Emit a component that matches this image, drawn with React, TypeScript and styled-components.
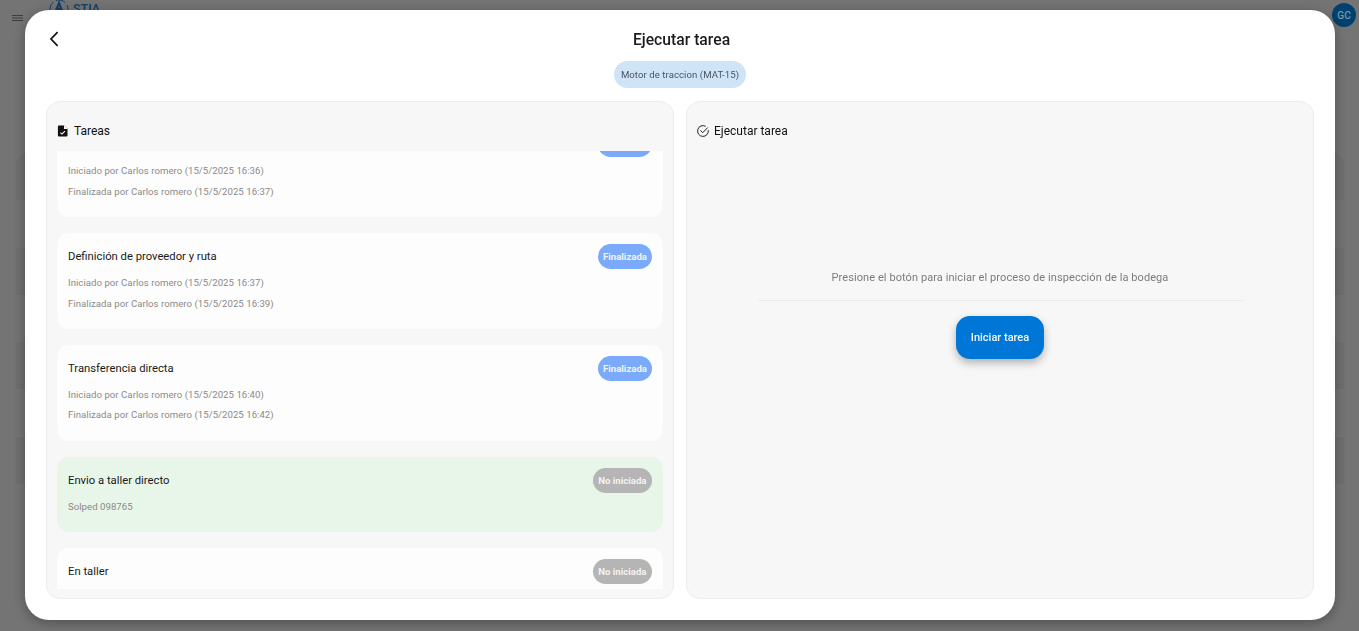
import React from "react";
import styled, { createGlobalStyle } from "styled-components";

const Global = createGlobalStyle`
  html, body { margin: 0; padding: 0; height: 100%; overflow: hidden; }
  body { font-family: Roboto, "Liberation Sans", sans-serif; background: #747474; }
  #root { height: 100%; }
`;

const Page = styled.div`
  height: 631px;
  background: #747474;
  overflow: hidden;
`;

const TopBar = styled.header`
  height: 28px;
  box-sizing: border-box;
  display: flex;
  align-items: flex-start;
  justify-content: space-between;
  padding: 3px 3px 0 12px;
`;

const BarLeft = styled.div`
  display: flex;
  align-items: flex-start;
  gap: 25px;
`;

const Brand = styled.div`
  display: flex;
  align-items: flex-start;
  gap: 4px;
  margin-top: -3px;
`;

const LogoWord = styled.span`
  font-size: 12.5px;
  font-weight: 500;
  color: #143f66;
  line-height: 16px;
  margin-top: 1px;
`;

const Avatar = styled.div`
  width: 24px;
  height: 24px;
  border-radius: 50%;
  background: #01416f;
  color: #7d97ad;
  font-size: 10px;
  font-weight: 500;
  display: flex;
  align-items: center;
  justify-content: center;
`;

const BackdropRows = styled.div`
  margin: 125px 15px 0 16px;
  display: flex;
  flex-direction: column;
  gap: 47.5px;
`;

const BackdropRow = styled.div<{ $first?: boolean }>`
  height: 47px;
  background: rgba(0, 0, 0, 0.045);
  border-radius: ${(p) => (p.$first ? "12px 12px 0 0" : "0")};
`;

const Modal = styled.section`
  position: fixed;
  left: 25px;
  top: 10px;
  width: 1310px;
  height: 610px;
  box-sizing: border-box;
  background: #fff;
  border-radius: 24px;
  box-shadow: 0 3px 12px rgba(0, 0, 0, 0.3);
  padding: 0 21px 21px;
  display: flex;
  flex-direction: column;
`;

const Head = styled.div`
  position: relative;
  display: flex;
  flex-direction: column;
  align-items: center;
  height: 91px;
  flex: none;
`;

const BackButton = styled.button`
  position: absolute;
  left: -3px;
  top: 17px;
  width: 24px;
  height: 24px;
  padding: 0;
  border: 0;
  background: none;
  color: #111;
  display: flex;
`;

const Title = styled.h1`
  margin: 20px 0 0 3px;
  font-size: 15.7px;
  line-height: 20px;
  font-weight: 500;
  color: #1c1c1c;
`;

const MaterialChip = styled.div`
  margin-top: 11px;
  height: 27px;
  box-sizing: border-box;
  padding: 0 7px;
  display: flex;
  align-items: center;
  border-radius: 14px;
  background: #cfe4f7;
  color: #4a5560;
  font-size: 9.6px;
  letter-spacing: 0.06px;
`;

const Columns = styled.div`
  flex: 1;
  min-height: 0;
  display: grid;
  grid-template-columns: 1fr 1fr;
  gap: 12px;
`;

const Panel = styled.div`
  box-sizing: border-box;
  min-height: 0;
  display: flex;
  flex-direction: column;
  background: #f7f7f7;
  border: 1px solid #ececec;
  border-radius: 14px;
  padding: 0 10px 9px;
`;

const PanelHead = styled.div`
  flex: none;
  height: 49px;
  padding-top: 9px;
  box-sizing: border-box;
  display: flex;
  align-items: center;
  gap: 5px;
  font-size: 12px;
  font-weight: 400;
  color: #111;
  svg { flex: none; }
`;

const TaskViewport = styled.div`
  flex: 1;
  min-height: 0;
  overflow: hidden;
`;

const TaskList = styled.div`
  margin-top: -30px;
  display: flex;
  flex-direction: column;
  gap: 16px;
`;

const TaskCard = styled.article<{ $active?: boolean; $h: number }>`
  box-sizing: border-box;
  height: ${(p) => p.$h}px;
  flex: none;
  padding: 11px 11px 0;
  border-radius: 12px;
  background: ${(p) => (p.$active ? "#e8f5e9" : "#fdfdfd")};
`;

const CardTop = styled.div`
  display: flex;
  align-items: center;
  justify-content: space-between;
  height: 25px;
  margin-bottom: 8px;
`;

const TaskName = styled.div`
  font-size: 11.25px;
  color: #1a1a1a;
`;

const Status = styled.span<{ $done?: boolean }>`
  height: 25px;
  min-width: 54px;
  box-sizing: border-box;
  padding: 0 ${(p) => (p.$done ? "5px" : "5.5px")};
  display: flex;
  align-items: center;
  justify-content: center;
  border-radius: 13px;
  font-size: 9.6px;
  font-weight: 700;
  color: #f2f2f2;
  background: ${(p) => (p.$done ? "#7baafb" : "#b5b5b5")};
`;

const Meta = styled.p`
  margin: 0 0 8.8px;
  font-size: 9.6px;
  line-height: 12px;
  color: #8a8a8a;
  letter-spacing: 0.04px;
`;

const Runner = styled.div`
  flex: 1;
  display: flex;
  flex-direction: column;
  align-items: center;
  padding-top: 119px;
`;

const Hint = styled.p`
  margin: 0;
  width: 485px;
  padding-bottom: 15px;
  border-bottom: 1px solid #eaeaea;
  text-align: center;
  font-size: 11px;
  line-height: 15px;
  letter-spacing: 0.08px;
  color: #7c7c7c;
`;

const StartButton = styled.button`
  margin-top: 15px;
  width: 88px;
  height: 43px;
  border: 0;
  border-radius: 14px;
  background: #0077d6;
  color: #f4f9fd;
  font-family: inherit;
  font-size: 11px;
  font-weight: 500;
  box-shadow: 0 4px 8px rgba(0, 0, 0, 0.28);
`;

const Chevron = () => (
  <svg width="24" height="24" viewBox="0 0 24 24" fill="none" stroke="currentColor" strokeWidth="1.7">
    <path d="M14.6 5.2 8 12l6.6 6.8" />
  </svg>
);

const FileCheck = () => (
  <svg width="12" height="12" viewBox="0 0 12 12">
    <path fill="#111" d="M1.9.6h5.4l3.2 3.2v6.6a1 1 0 0 1-1 1H1.9a1 1 0 0 1-1-1V1.6a1 1 0 0 1 1-1Z" />
    <path fill="#f7f7f7" d="M7 .6h.6l2.9 2.9V4.1H7Z" />
    <path fill="none" stroke="#fff" strokeWidth="1.1" d="m3.4 7.6 1.6 1.5 2.9-3" />
  </svg>
);

const CircleCheck = () => (
  <svg width="12" height="12" viewBox="0 0 12 12" fill="none" stroke="#222" strokeWidth="1">
    <path d="M11.3 5.2A5.4 5.4 0 1 1 8.6 1.3" />
    <path d="m3.5 5.5 2.2 2.2 5-5.2" />
  </svg>
);

const Menu = () => (
  <svg width="12" height="10" viewBox="0 0 12 10" stroke="#3c3c3c" strokeWidth="1" style={{ marginTop: 10 }}>
    <path d="M0 2.5h11M0 5h11M0 7.5h11" />
  </svg>
);

const LogoMark = () => (
  <svg width="20" height="20" viewBox="0 0 20 20" fill="none" stroke="#143f66" strokeWidth="1">
    <circle cx="10" cy="9" r="9" strokeDasharray="10 3" />
    <path strokeWidth="2.2" d="M6.5 12 10 3l3.5 9M7.5 9h5" />
  </svg>
);

const tasks = [
  { name: "", h: 95.85, done: true, lines: ["Iniciado por Carlos romero (15/5/2025 16:36)", "Finalizada por Carlos romero (15/5/2025 16:37)"] },
  { name: "Definición de proveedor y ruta", h: 95.85, done: true, lines: ["Iniciado por Carlos romero (15/5/2025 16:37)", "Finalizada por Carlos romero (15/5/2025 16:39)"] },
  { name: "Transferencia directa", h: 95.85, done: true, lines: ["Iniciado por Carlos romero (15/5/2025 16:40)", "Finalizada por Carlos romero (15/5/2025 16:42)"] },
  { name: "Envio a taller directo", h: 75, active: true, lines: ["Solped 098765"] },
  { name: "En taller", h: 75, lines: [] as string[] },
];

const statusLabel = (name: string, done?: boolean) => {
  if (!name) return "";
  return done ? "Finalizada" : "No iniciada";
};

export default function App() {
  return (
    <Page>
      <Global />
      <TopBar>
        <BarLeft>
          <Menu />
          <Brand>
            <LogoMark />
            <LogoWord>STIA</LogoWord>
          </Brand>
        </BarLeft>
        <Avatar>GC</Avatar>
      </TopBar>
      <BackdropRows>
        <BackdropRow $first />
        <BackdropRow />
        <BackdropRow />
        <BackdropRow />
      </BackdropRows>
      <Modal>
        <Head>
          <BackButton aria-label="Volver"><Chevron /></BackButton>
          <Title>Ejecutar tarea</Title>
          <MaterialChip>Motor de traccion (MAT-15)</MaterialChip>
        </Head>
        <Columns>
          <Panel>
            <PanelHead><FileCheck />Tareas</PanelHead>
            <TaskViewport>
              <TaskList>
                {tasks.map((t) => (
                  <TaskCard key={t.lines[0] ?? t.name} $h={t.h} $active={t.active}>
                    <CardTop>
                      <TaskName>{t.name}</TaskName>
                      <Status $done={t.done}>{statusLabel(t.name, t.done)}</Status>
                    </CardTop>
                    {t.lines.map((l) => <Meta key={l}>{l}</Meta>)}
                  </TaskCard>
                ))}
              </TaskList>
            </TaskViewport>
          </Panel>
          <Panel>
            <PanelHead><CircleCheck />Ejecutar tarea</PanelHead>
            <Runner>
              <Hint>Presione el botón para iniciar el proceso de inspección de la bodega</Hint>
              <StartButton>Iniciar tarea</StartButton>
            </Runner>
          </Panel>
        </Columns>
      </Modal>
    </Page>
  );
}
